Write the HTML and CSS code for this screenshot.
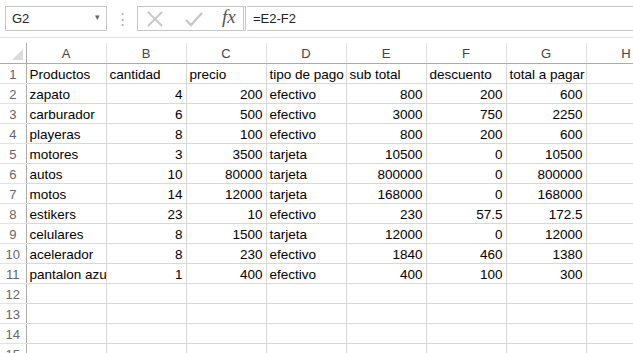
FILE: index.html
```html
<!DOCTYPE html>
<html lang="es">
<head>
    <meta charset="UTF-8">
    <title>Hoja de cálculo</title>
    <link rel="stylesheet" href="styles.css">
</head>
<body>

<div class="formula-row">
    <div class="name-box">
        <span>G2</span>
        <span class="arrow">&#9662;</span>
    </div>
    <div class="grip">&#8942;</div>
    <div class="buttons">
        <svg class="btn" width="18" height="16" viewBox="0 0 18 16">
            <path d="M2 1 L16 15 M16 1 L2 15" stroke="#c8c8c8" stroke-width="2" fill="none"/>
        </svg>
        <svg class="btn" width="18" height="16" viewBox="0 0 18 16">
            <path d="M1 9 L6 14 L17 2" stroke="#c8c8c8" stroke-width="2.4" fill="none"/>
        </svg>
        <span class="fx">fx</span>
    </div>
    <div class="formula">=E2-F2</div>
</div>

<table class="sheet">
    <colgroup>
        <col class="c-head">
        <col><col><col><col><col><col><col><col>
    </colgroup>
    <thead>
        <tr>
            <th class="corner"><span class="tri"></span></th>
            <th>A</th><th>B</th><th>C</th><th>D</th><th>E</th><th>F</th><th>G</th><th>H</th>
        </tr>
    </thead>
    <tbody>
        <tr><th>1</th><td>Productos</td><td>cantidad</td><td>precio</td><td class="over">tipo de pago</td><td>sub total</td><td>descuento</td><td>total a pagar</td><td></td></tr>
        <tr><th>2</th><td>zapato</td><td class="n">4</td><td class="n">200</td><td>efectivo</td><td class="n">800</td><td class="n">200</td><td class="n">600</td><td></td></tr>
        <tr><th>3</th><td>carburador</td><td class="n">6</td><td class="n">500</td><td>efectivo</td><td class="n">3000</td><td class="n">750</td><td class="n">2250</td><td></td></tr>
        <tr><th>4</th><td>playeras</td><td class="n">8</td><td class="n">100</td><td>efectivo</td><td class="n">800</td><td class="n">200</td><td class="n">600</td><td></td></tr>
        <tr><th>5</th><td>motores</td><td class="n">3</td><td class="n">3500</td><td>tarjeta</td><td class="n">10500</td><td class="n">0</td><td class="n">10500</td><td></td></tr>
        <tr><th>6</th><td>autos</td><td class="n">10</td><td class="n">80000</td><td>tarjeta</td><td class="n">800000</td><td class="n">0</td><td class="n">800000</td><td></td></tr>
        <tr><th>7</th><td>motos</td><td class="n">14</td><td class="n">12000</td><td>tarjeta</td><td class="n">168000</td><td class="n">0</td><td class="n">168000</td><td></td></tr>
        <tr><th>8</th><td>estikers</td><td class="n">23</td><td class="n">10</td><td>efectivo</td><td class="n">230</td><td class="n">57.5</td><td class="n">172.5</td><td></td></tr>
        <tr><th>9</th><td>celulares</td><td class="n">8</td><td class="n">1500</td><td>tarjeta</td><td class="n">12000</td><td class="n">0</td><td class="n">12000</td><td></td></tr>
        <tr><th>10</th><td>acelerador</td><td class="n">8</td><td class="n">230</td><td>efectivo</td><td class="n">1840</td><td class="n">460</td><td class="n">1380</td><td></td></tr>
        <tr><th>11</th><td>pantalon azul</td><td class="n">1</td><td class="n">400</td><td>efectivo</td><td class="n">400</td><td class="n">100</td><td class="n">300</td><td></td></tr>
        <tr><th>12</th><td></td><td></td><td></td><td></td><td></td><td></td><td></td><td></td></tr>
        <tr><th>13</th><td></td><td></td><td></td><td></td><td></td><td></td><td></td><td></td></tr>
        <tr><th>14</th><td></td><td></td><td></td><td></td><td></td><td></td><td></td><td></td></tr>
        <tr><th>15</th><td></td><td></td><td></td><td></td><td></td><td></td><td></td><td></td></tr>
    </tbody>
</table>

</body>
</html>
```

FILE: styles.css
```css
body {
    margin: 0;
    width: 633px;
    height: 353px;
    overflow: hidden;
    background: #fff;
    font-family: "Liberation Sans", Arial, sans-serif;
}

.formula-row {
    display: flex;
    align-items: center;
    height: 38px;
    padding: 0 0 0 5px;
    border-bottom: 1px solid #e1e1e1;
    box-sizing: border-box;
    margin-bottom: 5px;
}

.name-box {
    display: flex;
    align-items: center;
    justify-content: space-between;
    width: 102px;
    height: 25px;
    box-sizing: border-box;
    border: 1px solid #c6c6c6;
    padding: 0 6px 0 6px;
    font-size: 13px;
    color: #222;
}

.name-box .arrow {
    font-size: 9px;
    color: #666;
    margin-bottom: 3px;
}

.grip {
    width: 30px;
    text-align: center;
    color: #b0b0b0;
    font-size: 15px;
}

.buttons {
    display: flex;
    align-items: center;
    gap: 21px;
    width: 109px;
    height: 25px;
    box-sizing: border-box;
    border: 1px solid #c6c6c6;
    border-right: 3px double #c6c6c6;
    padding-left: 8px;
}

.fx {
    font-family: "Liberation Serif", "Times New Roman", serif;
    font-style: italic;
    font-size: 19px;
    color: #555;
    margin-left: -2px;
    margin-top: -3px;
}

.formula {
    flex: 1;
    height: 25px;
    box-sizing: border-box;
    border-top: 1px solid #c6c6c6;
    border-bottom: 1px solid #c6c6c6;
    margin-left: 1px;
    padding: 4px 0 0 6px;
    font-size: 13px;
    color: #222;
}

.sheet {
    border-collapse: collapse;
    table-layout: fixed;
    width: 666px;
    font-size: 13.5px;
}

.sheet col {
    width: 80px;
}

.sheet col.c-head {
    width: 26px;
}

.sheet tr {
    height: 20px;
}

.sheet th,
.sheet td {
    height: 20px;
    padding: 0;
    box-sizing: border-box;
    white-space: nowrap;
    overflow: hidden;
}

.sheet thead th {
    font-weight: normal;
    font-size: 13px;
    color: #444;
    text-align: center;
    border-right: 1px solid #e2e2e2;
    border-bottom: 1px solid #ababab;
    padding-top: 1px;
}

.sheet tbody th {
    font-weight: normal;
    font-size: 13px;
    color: #666;
    text-align: center;
    border-right: 1px solid #ababab;
    border-bottom: 1px solid #e2e2e2;
    padding-top: 2px;
}

.sheet thead th.corner {
    border-right: 1px solid #ababab;
    position: relative;
}

.tri {
    position: absolute;
    right: 3px;
    bottom: 3px;
    width: 0;
    height: 0;
    border-left: 11px solid transparent;
    border-bottom: 11px solid #dcdcdc;
}

.sheet td {
    border-right: 1px solid #d8d8d8;
    border-bottom: 1px solid #d8d8d8;
    padding: 2px 3px 0 3px;
    color: #000;
}

.sheet td.n {
    text-align: right;
    padding-right: 3px;
}

.sheet td.over {
    overflow: visible;
    padding-right: 0;
}
```
